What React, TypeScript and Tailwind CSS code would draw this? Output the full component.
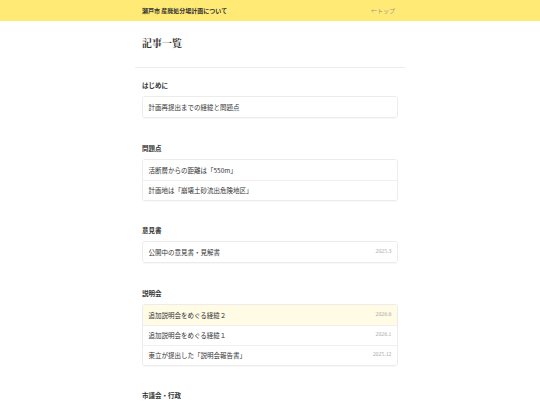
import React from 'react';

type Item = { title: string; date?: string; highlight?: boolean };
type Section = { heading: string; items: Item[] };

const SECTIONS: Section[] = [
  { heading: 'はじめに', items: [{ title: '計画再提出までの経緯と問題点' }] },
  {
    heading: '問題点',
    items: [{ title: '活断層からの距離は「550m」' }, { title: '計画地は「崩壊土砂流出危険地区」' }],
  },
  { heading: '意見書', items: [{ title: '公開中の意見書・見解書', date: '2025.3' }] },
  {
    heading: '説明会',
    items: [
      { title: '追加説明会をめぐる経緯２', date: '2026.6', highlight: true },
      { title: '追加説明会をめぐる経緯１', date: '2026.1' },
      { title: '東立が提出した「説明会報告書」', date: '2025.12' },
    ],
  },
  { heading: '市議会・行政', items: [{ title: '市議会での質疑' }] },
];

const sans = "font-['Noto_Sans_CJK_JP','Noto_Sans',sans-serif]";

export default function App() {
  return (
    <div className={`min-h-screen bg-white text-[#333] ${sans}`}>
      {/* Header */}
      <header className="h-[21px] bg-[#ffea76]">
        <div className="mx-auto flex h-full max-w-[270px] items-center justify-between px-[7px]">
          <span className="text-[6px] font-bold leading-none text-[#333]">瀬戸市 産廃処分場計画について</span>
          <span className="pr-[3px] text-[6px] leading-none text-[#999]">←トップ</span>
        </div>
      </header>

      <main className="mx-auto max-w-[270px]">
        {/* Title */}
        <div className="border-b border-[#ececec] px-[7px] pb-[18px] pt-[16px]">
          <h1 className="font-['Noto_Serif_CJK_JP','Liberation_Serif',serif] text-[10px] font-bold leading-[12px] text-[#333]">
            記事一覧
          </h1>
        </div>

        <div className="px-[7px] pt-[12px]">
          {SECTIONS.map((s) => (
            <section key={s.heading} className="mb-[24.5px]">
              <h2 className="mb-[6px] text-[6.5px] font-bold leading-[10px] text-[#333]">{s.heading}</h2>
              <ul className="overflow-hidden rounded-[3px] border border-[#ececec] shadow-[0_0.5px_1px_rgba(0,0,0,0.03)]">
                {s.items.map((it, i) => (
                  <li
                    key={it.title}
                    className={`flex h-[20px] items-center justify-between px-[5.5px] ${
                      i > 0 ? 'border-t border-[#f0f0f0]' : ''
                    } ${it.highlight ? 'bg-[#fffbe5]' : 'bg-white'}`}
                  >
                    <span className="text-[6.5px] leading-[10px] text-[#333]">{it.title}</span>
                    {it.date && (
                      <span className="font-['Liberation_Serif',serif] text-[5.8px] leading-none text-[#aaa]">
                        {it.date}
                      </span>
                    )}
                  </li>
                ))}
              </ul>
            </section>
          ))}
        </div>
      </main>
    </div>
  );
}
